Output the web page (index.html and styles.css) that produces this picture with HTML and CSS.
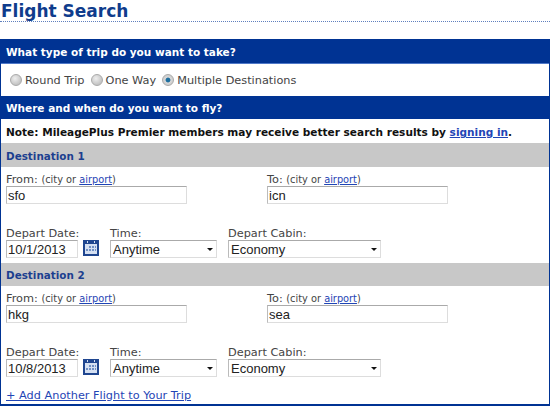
FILE: index.html
```html
<!DOCTYPE html>
<html lang="en">
<head>
    <meta charset="UTF-8">
    <meta name="viewport" content="width=device-width, initial-scale=1.0">
    <title>Flight Search</title>
    <link rel="stylesheet" href="styles.css">
</head>
<body>
    <h1 class="page-title">Flight Search</h1>

    <form class="search-box">
        <h2 class="bar">What type of trip do you want to take?</h2>
        <div class="trip-types">
            <label><input type="radio" name="trip"> Round Trip</label>
            <label><input type="radio" name="trip"> One Way</label>
            <label><input type="radio" name="trip" checked> Multiple Destinations</label>
        </div>

        <h2 class="bar bar-second">Where and when do you want to fly?</h2>
        <p class="note">Note: MileagePlus Premier members may receive better search results by <a href="#">signing in</a>.</p>

        <!-- Destination 1 -->
        <h3 class="dest-head">Destination 1</h3>
        <div class="dest">
            <div class="row">
                <div class="field place">
                    <label>From: <small>(city or <a href="#">airport</a>)</small></label>
                    <input type="text" value="sfo">
                </div>
                <div class="field place">
                    <label>To: <small>(city or <a href="#">airport</a>)</small></label>
                    <input type="text" value="icn">
                </div>
            </div>
            <div class="row row-date">
                <div class="field date">
                    <label>Depart Date:</label>
                    <div class="date-input">
                        <input type="text" value="10/1/2013">
                        <svg class="cal" width="16" height="16" viewBox="0 0 16 16">
                            <rect width="16" height="16" fill="#1f4690"/>
                            <rect x="2" y="4" width="12" height="10" fill="#d5e0f2"/>
                            <path d="M4 1h1v2H4zM11 1h1v2h-1z" fill="#d5e0f2"/>
                            <path d="M6 6h2v2H6zM9 6h2v2H9zM3 9h2v2H3zM6 9h2v2H6zM9 9h2v2H9zM12 6h1v2h-1zM12 9h1v2h-1z" fill="#6f8fc4"/>
                        </svg>
                    </div>
                </div>
                <div class="field time">
                    <label>Time:</label>
                    <div class="select-wrap"><select><option>Anytime</option></select></div>
                </div>
                <div class="field cabin">
                    <label>Depart Cabin:</label>
                    <div class="select-wrap"><select><option>Economy</option></select></div>
                </div>
            </div>
        </div>

        <!-- Destination 2 -->
        <h3 class="dest-head">Destination 2</h3>
        <div class="dest">
            <div class="row">
                <div class="field place">
                    <label>From: <small>(city or <a href="#">airport</a>)</small></label>
                    <input type="text" value="hkg">
                </div>
                <div class="field place">
                    <label>To: <small>(city or <a href="#">airport</a>)</small></label>
                    <input type="text" value="sea">
                </div>
            </div>
            <div class="row row-date">
                <div class="field date">
                    <label>Depart Date:</label>
                    <div class="date-input">
                        <input type="text" value="10/8/2013">
                        <svg class="cal" width="16" height="16" viewBox="0 0 16 16">
                            <rect width="16" height="16" fill="#1f4690"/>
                            <rect x="2" y="4" width="12" height="10" fill="#d5e0f2"/>
                            <path d="M4 1h1v2H4zM11 1h1v2h-1z" fill="#d5e0f2"/>
                            <path d="M6 6h2v2H6zM9 6h2v2H9zM3 9h2v2H3zM6 9h2v2H6zM9 9h2v2H9zM12 6h1v2h-1zM12 9h1v2h-1z" fill="#6f8fc4"/>
                        </svg>
                    </div>
                </div>
                <div class="field time">
                    <label>Time:</label>
                    <div class="select-wrap"><select><option>Anytime</option></select></div>
                </div>
                <div class="field cabin">
                    <label>Depart Cabin:</label>
                    <div class="select-wrap"><select><option>Economy</option></select></div>
                </div>
            </div>
        </div>

        <a class="add-flight" href="#">+ Add Another Flight to Your Trip</a>
    </form>
</body>
</html>
```

FILE: styles.css
```css
body { margin: 0; background-color: #fff; font-family: "DejaVu Sans", sans-serif; font-size: 11.3px; color: #444; overflow: hidden; }
a { color: #1f45b5; }
.page-title { margin: 0 0 17px; height: 21px; line-height: 23px; padding-left: 1px; font-size: 17px; font-weight: bold; color: #0f3c8c; border-bottom: 1px dotted #5f7fbd; }
.search-box { border: solid #003393; border-width: 0 1px 2px; height: 367px; box-sizing: border-box; }
.bar { margin: 0; height: 25px; line-height: 26px; padding-left: 5px; font-size: 10.5px; font-weight: bold; color: #fff; background-color: #003393; border-bottom: 1px solid #4f78c8; box-sizing: border-box; }
.bar-second { height: 23px; line-height: 25px; border-bottom: 0; }
.trip-types { height: 32px; display: flex; align-items: center; gap: 6px; padding: 1px 0 0 9px; box-sizing: border-box; }
.trip-types label { display: flex; align-items: center; gap: 3px; }
.trip-types input { appearance: none; margin: -2px 0 0; width: 12px; height: 12px; border: 1px solid #aaa; border-radius: 50%; background: radial-gradient(circle at 40% 35%, #eee, #c4c4c4 70%); }
.trip-types input:checked { background: radial-gradient(circle, #1f6f9f 0, #1f6f9f 28%, #d8d8d8 40%, #c4c4c4 100%); }
.note { margin: 0; height: 24px; line-height: 26px; padding-left: 5px; font-size: 10.55px; font-weight: bold; color: #111; }
.dest-head { margin: 0; height: 24px; line-height: 26px; padding-left: 5px; font-size: 10.4px; font-weight: bold; color: #1c3f8f; background-color: #c8c8c8; }
.dest { height: 96px; padding: 5px 5px 0; box-sizing: border-box; }
.dest + .dest-head { height: 23px; line-height: 25px; }
.row { display: flex; }
.row-date { margin-top: 22px; }
.field label { display: block; height: 14px; line-height: 16px; }
.field small { font-size: 9.8px; }
.place { width: 261px; }
input[type="text"], select { box-sizing: border-box; height: 18px; font-family: "Liberation Sans", sans-serif; font-size: 13px; color: #222; background-color: #fff; border: 1px solid #ddd; border-top-color: #aaa; border-left-color: #bbb; border-radius: 0; padding: 0 1px; margin: 0; }
select { appearance: none; display: block; padding: 0 2px; }
.place input { width: 181px; }
.date { width: 104px; }
.date-input { display: flex; align-items: flex-start; gap: 5px; }
.date-input input { width: 72px; }
.time { width: 118px; }
.time select { width: 107px; }
.cabin select { width: 153px; }
.select-wrap { position: relative; width: fit-content; }
.select-wrap::after { content: ""; position: absolute; right: 4px; top: 8px; border: 3px solid transparent; border-top-color: #111; border-bottom-width: 0; }
.cal { display: block; }
.add-flight { display: block; margin: 7px 0 0 5px; height: 14px; line-height: 14px; font-size: 11.3px; }
```
